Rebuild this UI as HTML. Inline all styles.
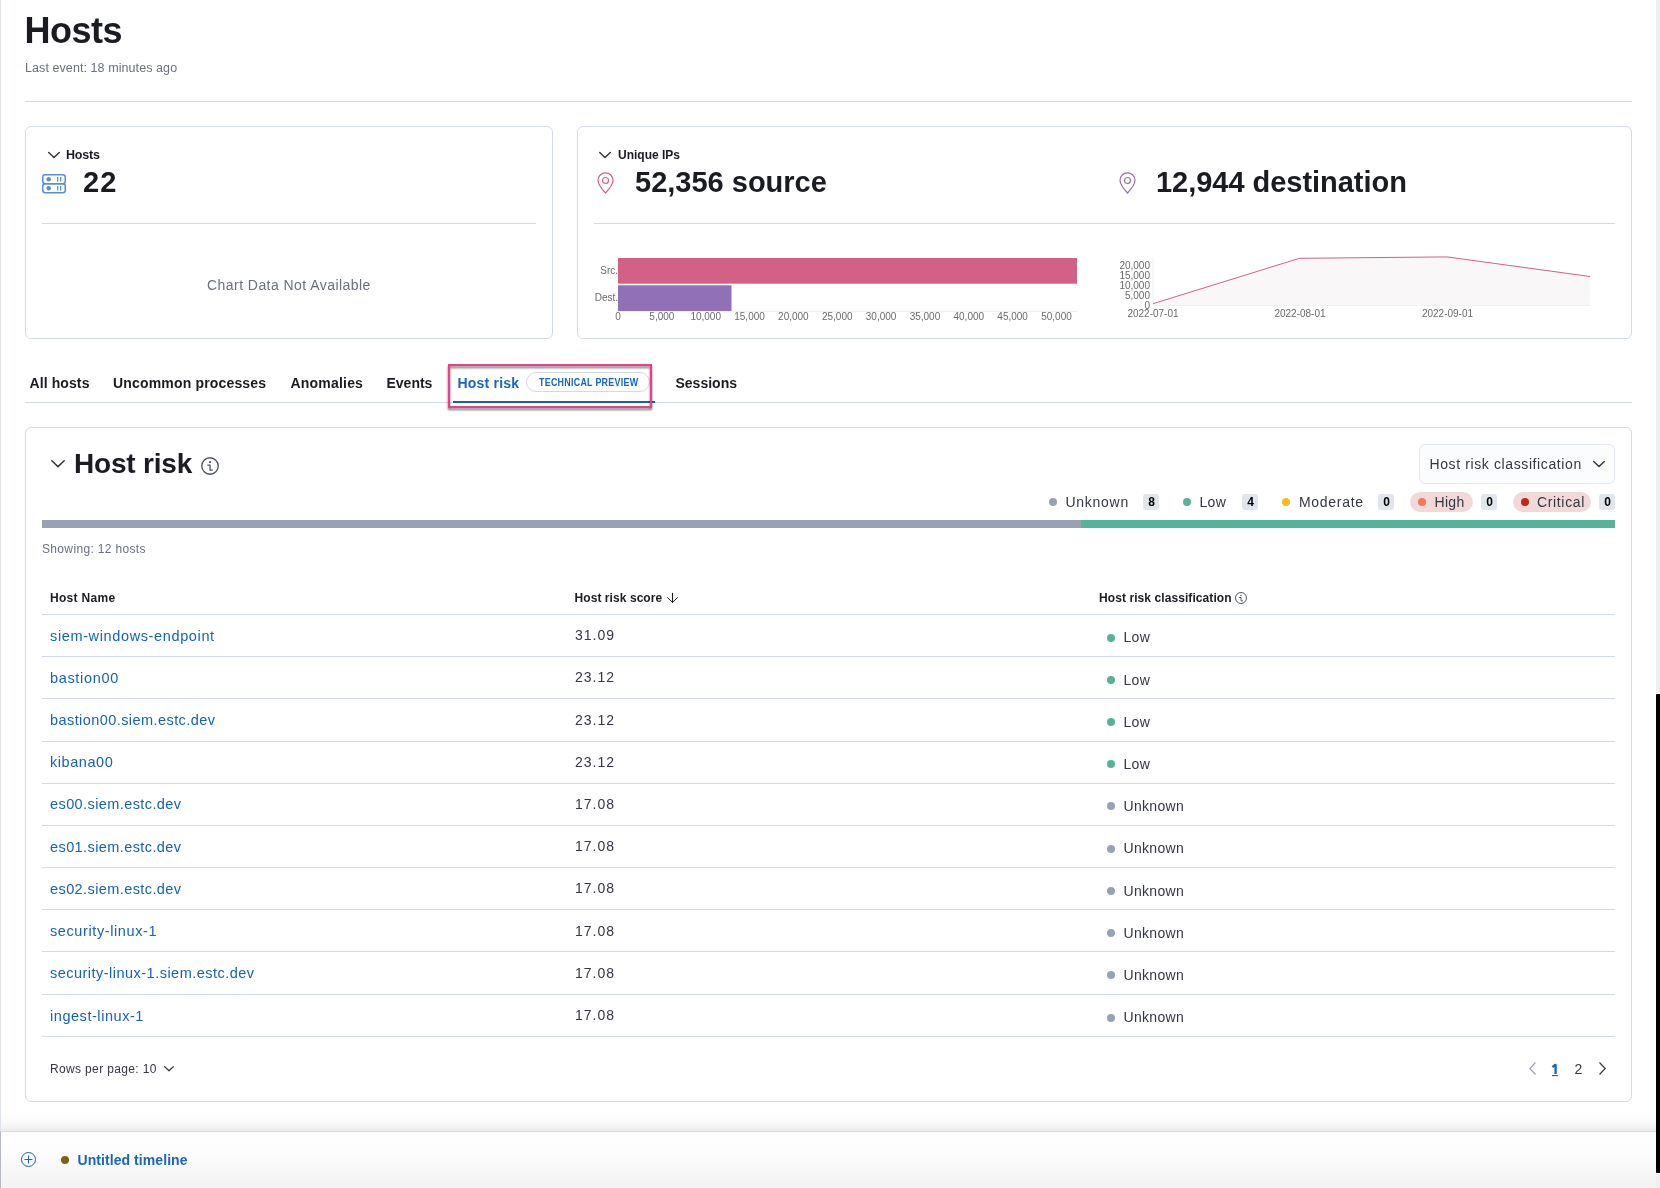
<!DOCTYPE html>
<html><head><meta charset="utf-8">
<style>
*{box-sizing:border-box;margin:0;padding:0}
body{will-change:transform;-webkit-font-smoothing:antialiased}html,body{width:1660px;height:1188px;overflow:hidden;background:#fff;font-family:"Liberation Sans",sans-serif;color:#343741}
.a{position:absolute;white-space:nowrap;line-height:1}
.b{font-weight:bold}
.panel{position:absolute;border:1px solid #D3DAE6;border-radius:6px;background:#fff}
.hr{position:absolute;height:1px;background:#D3DAE6}
.link{color:#1462BC}
svg{position:absolute;overflow:visible}
</style></head><body>
<div style="position:absolute;left:0;top:0;width:1px;height:1131px;background:#DDE2EC"></div>

<!-- Header -->
<div class="a b" style="left:24.6px;top:12.5px;font-size:36px;letter-spacing:-0.5px;color:#1A1C21">Hosts</div>
<div class="a" style="left:25px;top:62.4px;font-size:12.5px;letter-spacing:0.08px;color:#69707D">Last event: 18 minutes ago</div>
<div class="hr" style="left:25px;top:101px;width:1607px"></div>

<!-- Hosts panel -->
<div class="panel" style="left:25px;top:126px;width:528px;height:213px"></div>
<svg style="left:48px;top:152px" width="12" height="7" viewBox="0 0 12 7"><path d="M0.7 0.5 L6 5.6 L11.3 0.5" fill="none" stroke="#343741" stroke-width="1.45" stroke-linecap="round" stroke-linejoin="round"/></svg>
<div class="a b" style="left:66px;top:149.4px;font-size:12.5px;letter-spacing:-0.2px;color:#1A1C21">Hosts</div>
<svg style="left:42px;top:174px" width="24" height="20" viewBox="0 0 24 20">
 <rect x="0.75" y="0.75" width="22.5" height="9" rx="2.5" fill="none" stroke="#5B90C6" stroke-width="1.5"/>
 <rect x="0.75" y="9.75" width="22.5" height="9" rx="2.5" fill="none" stroke="#5B90C6" stroke-width="1.5"/>
 <circle cx="6.7" cy="5.3" r="2.25" fill="#5B90C6"/><circle cx="6.7" cy="14.3" r="2.25" fill="#5B90C6"/>
 <rect x="15" y="3" width="1.3" height="4.6" fill="#5B90C6"/><rect x="18" y="3" width="1.3" height="4.6" fill="#5B90C6"/>
 <rect x="15" y="12" width="1.3" height="4.6" fill="#5B90C6"/><rect x="18" y="12" width="1.3" height="4.6" fill="#5B90C6"/>
</svg>
<div class="a b" style="left:83px;top:167.5px;font-size:29px;letter-spacing:1.2px;color:#1A1C21">22</div>
<div class="hr" style="left:42px;top:223px;width:494px"></div>
<div class="a" style="left:207px;top:278px;font-size:14px;letter-spacing:0.45px;color:#69707D">Chart Data Not Available</div>

<!-- Unique IPs panel -->
<div class="panel" style="left:577px;top:126px;width:1055px;height:213px"></div>
<svg style="left:599px;top:152px" width="12" height="7" viewBox="0 0 12 7"><path d="M0.7 0.5 L6 5.6 L11.3 0.5" fill="none" stroke="#343741" stroke-width="1.45" stroke-linecap="round" stroke-linejoin="round"/></svg>
<div class="a b" style="left:618px;top:149.4px;font-size:12px;color:#1A1C21">Unique IPs</div>
<div class="a b" style="left:635px;top:168.4px;font-size:29px;letter-spacing:0px;color:#1A1C21">52,356 source</div>
<div class="a b" style="left:1156px;top:168.4px;font-size:29px;letter-spacing:-0.03px;color:#1A1C21">12,944 destination</div>
<div class="hr" style="left:594px;top:223px;width:1021px"></div>

<svg style="left:597px;top:172px" width="17" height="22" viewBox="0 0 17 22"><path d="M8.5 21 C8.5 21 1 13 1 8.3 A7.5 7.5 0 0 1 16 8.3 C16 13 8.5 21 8.5 21 Z" fill="none" stroke="#D36086" stroke-width="1.2"/><circle cx="8.5" cy="8.5" r="3" fill="none" stroke="#D36086" stroke-width="1.2"/></svg>
<svg style="left:1119px;top:172px" width="17" height="22" viewBox="0 0 17 22"><path d="M8.5 21 C8.5 21 1 13 1 8.3 A7.5 7.5 0 0 1 16 8.3 C16 13 8.5 21 8.5 21 Z" fill="none" stroke="#9170B8" stroke-width="1.2"/><circle cx="8.5" cy="8.5" r="3" fill="none" stroke="#9170B8" stroke-width="1.2"/></svg>

<!-- bar chart -->
<svg style="left:0;top:0" width="1660" height="400">
 <g font-family="Liberation Sans" font-size="10" fill="#6A6A6A">
  <text x="618" y="273.5" text-anchor="end">Src.</text>
  <text x="618" y="300.5" text-anchor="end">Dest.</text>
 </g>
 <rect x="618" y="258" width="459" height="25.7" fill="#D36086"/>
 <rect x="618" y="285.3" width="113.5" height="25.7" fill="#9170B8"/>
 <rect x="618" y="311" width="459" height="1" fill="#EEF0F3"/>
 <g font-family="Liberation Sans" font-size="10" fill="#6A6A6A" text-anchor="middle">
  <text x="618" y="320">0</text><text x="661.85" y="320">5,000</text><text x="705.7" y="320">10,000</text>
  <text x="749.55" y="320">15,000</text><text x="793.4" y="320">20,000</text><text x="837.25" y="320">25,000</text>
  <text x="881.1" y="320">30,000</text><text x="924.95" y="320">35,000</text><text x="968.8" y="320">40,000</text>
  <text x="1012.65" y="320">45,000</text><text x="1056.5" y="320">50,000</text>
 </g>
 <!-- area chart -->
 <polygon points="1153,303.7 1299.5,258.3 1447,256.9 1590,276.5 1590,305.5 1153,305.5" fill="#FAF7F9"/>
 <rect x="1153" y="305" width="437" height="1" fill="#EEF0F3"/>
 <rect x="1152.5" y="257" width="1" height="49" fill="#EEF0F3"/>
 <polyline points="1153,303.7 1299.5,258.3 1447,256.9 1590,276.5" fill="none" stroke="#D36086" stroke-width="1"/>
 <g font-family="Liberation Sans" font-size="10" fill="#6A6A6A" text-anchor="end">
  <text x="1150" y="269">20,000</text><text x="1150" y="279">15,000</text><text x="1150" y="289">10,000</text>
  <text x="1150" y="299">5,000</text><text x="1150" y="309">0</text>
 </g>
 <g font-family="Liberation Sans" font-size="10" fill="#6A6A6A" text-anchor="middle">
  <text x="1153" y="317">2022-07-01</text><text x="1300" y="317">2022-08-01</text><text x="1447.5" y="317">2022-09-01</text>
 </g>
</svg>

<!-- Tabs -->
<div class="hr" style="left:25px;top:402px;width:1607px"></div>
<div class="a b" style="left:29.5px;top:376px;font-size:14px;letter-spacing:0.1px;color:#1A1C21">All hosts</div>
<div class="a b" style="left:113px;top:376px;font-size:14px;letter-spacing:0.17px;color:#1A1C21">Uncommon processes</div>
<div class="a b" style="left:290.5px;top:376px;font-size:14px;letter-spacing:0.2px;color:#1A1C21">Anomalies</div>
<div class="a b" style="left:386.5px;top:376px;font-size:14px;color:#1A1C21">Events</div>
<div class="a b" style="left:457.5px;top:376px;font-size:14px;letter-spacing:0.2px;color:#1765C0">Host risk</div>
<div style="position:absolute;left:526px;top:372px;width:124px;height:20px;border:1px solid #D3DAE6;border-radius:10px"></div>
<div class="a b" style="left:538.8px;top:377.7px;font-size:10px;letter-spacing:0.3px;color:#1765C0;transform:scaleX(0.89);transform-origin:0 0">TECHNICAL PREVIEW</div>
<div style="position:absolute;left:453px;top:401px;width:202px;height:2px;background:#0D5FC0"></div>
<div class="a b" style="left:675.5px;top:376px;font-size:14px;color:#1A1C21">Sessions</div>
<div style="position:absolute;left:448px;top:364px;width:204px;height:44px;border:2px solid #EE3D8C;filter:drop-shadow(0px 2px 1.2px rgba(0,0,0,0.55))"></div>

<!-- Host risk panel -->
<div class="panel" style="left:25px;top:427px;width:1607px;height:675px"></div>
<svg style="left:51px;top:460px" width="14" height="8" viewBox="0 0 14 8"><path d="M0.8 0.7 L7 6.6 L13.2 0.7" fill="none" stroke="#343741" stroke-width="1.5" stroke-linecap="round" stroke-linejoin="round"/></svg>
<div class="a b" style="left:74px;top:449.8px;font-size:28px;letter-spacing:-0.2px;color:#1A1C21">Host risk</div>
<svg style="left:201px;top:457px" width="18" height="18" viewBox="0 0 18 18"><circle cx="9" cy="9" r="8.25" fill="none" stroke="#4A505C" stroke-width="1.3"/><rect x="8.1" y="4.2" width="1.9" height="1.9" rx="0.3" fill="#4A505C"/><path d="M6.3 8.2 H9.05 V13.2 H11.8" fill="none" stroke="#4A505C" stroke-width="1.3" stroke-linejoin="round"/></svg>

<div style="position:absolute;left:1419px;top:444px;width:196px;height:40px;border:1px solid #E3E8F2;border-radius:6px;background:#FBFCFD"></div>
<div class="a" style="left:1429.5px;top:457px;font-size:14px;letter-spacing:0.61px;color:#343741">Host risk classification</div>
<svg style="left:1593px;top:461px" width="12" height="7" viewBox="0 0 12 7"><path d="M0.7 0.5 L6 5.6 L11.3 0.5" fill="none" stroke="#343741" stroke-width="1.45" stroke-linecap="round" stroke-linejoin="round"/></svg>

<!-- legend -->
<div style="position:absolute;left:1049px;top:498px;width:8px;height:8px;border-radius:50%;background:#98A2B3"></div>
<div class="a" style="left:1065.5px;top:495px;font-size:14px;letter-spacing:0.72px">Unknown</div>
<div style="position:absolute;left:1143px;top:494px;width:16px;height:16px;border-radius:3px;background:#E0E5EE"></div>
<div class="a b" style="left:1143.5px;top:495.5px;width:16px;text-align:center;font-size:12px;color:#000">8</div>

<div style="position:absolute;left:1183px;top:498px;width:8px;height:8px;border-radius:50%;background:#54B399"></div>
<div class="a" style="left:1199.5px;top:495px;font-size:14px;letter-spacing:0.3px">Low</div>
<div style="position:absolute;left:1242px;top:494px;width:16px;height:16px;border-radius:3px;background:#E0E5EE"></div>
<div class="a b" style="left:1242.5px;top:495.5px;width:16px;text-align:center;font-size:12px;color:#000">4</div>

<div style="position:absolute;left:1282px;top:498px;width:8px;height:8px;border-radius:50%;background:#F5BD1B"></div>
<div class="a" style="left:1299px;top:495px;font-size:14px;letter-spacing:0.7px">Moderate</div>
<div style="position:absolute;left:1378px;top:494px;width:16px;height:16px;border-radius:3px;background:#E0E5EE"></div>
<div class="a b" style="left:1378.5px;top:495.5px;width:16px;text-align:center;font-size:12px;color:#000">0</div>

<div style="position:absolute;left:1410px;top:492px;width:63px;height:20px;border-radius:10px;background:#F2D9D9"></div>
<div style="position:absolute;left:1418px;top:498px;width:8px;height:8px;border-radius:50%;background:#F4775C"></div>
<div class="a" style="left:1434.5px;top:495px;font-size:14px;letter-spacing:0.3px">High</div>
<div style="position:absolute;left:1481px;top:494px;width:16px;height:16px;border-radius:3px;background:#E0E5EE"></div>
<div class="a b" style="left:1481.5px;top:495.5px;width:16px;text-align:center;font-size:12px;color:#000">0</div>

<div style="position:absolute;left:1513px;top:492px;width:78px;height:20px;border-radius:10px;background:#F2D9D9"></div>
<div style="position:absolute;left:1521px;top:498px;width:8px;height:8px;border-radius:50%;background:#BD271E"></div>
<div class="a" style="left:1537px;top:495px;font-size:14px;letter-spacing:0.65px">Critical</div>
<div style="position:absolute;left:1599px;top:494px;width:16px;height:16px;border-radius:3px;background:#E0E5EE"></div>
<div class="a b" style="left:1599.5px;top:495.5px;width:16px;text-align:center;font-size:12px;color:#000">0</div>

<div style="position:absolute;left:42px;top:520px;width:1039px;height:8px;background:#98A2B3"></div>
<div style="position:absolute;left:1081px;top:520px;width:534px;height:8px;background:#54B399"></div>

<div class="a" style="left:42px;top:542.8px;font-size:12px;letter-spacing:0.34px;color:#69707D">Showing: 12 hosts</div>

<!-- table header -->
<div class="a b" style="left:50px;top:591.8px;font-size:12px;letter-spacing:0.3px;color:#1A1C21">Host Name</div>
<div class="a b" style="left:574.5px;top:591.8px;font-size:12px;letter-spacing:0.07px;color:#1A1C21">Host risk score</div>
<svg style="left:667px;top:593px" width="11" height="10" viewBox="0 0 11 10"><path d="M5.5 0.4 V9.3" fill="none" stroke="#1A1C21" stroke-width="1.1" stroke-linecap="round"/><path d="M0.5 4.6 L5.5 9.4 L10.5 4.6" fill="none" stroke="#1A1C21" stroke-width="0.95" stroke-linecap="round" stroke-linejoin="round"/></svg>
<div class="a b" style="left:1099px;top:591.8px;font-size:12px;letter-spacing:0.08px;color:#1A1C21">Host risk classification</div>
<svg style="left:1235px;top:592px" width="12" height="12" viewBox="0 0 12 12"><circle cx="6" cy="6" r="5.5" fill="none" stroke="#4A505C" stroke-width="0.95"/><rect x="5.4" y="2.8" width="1.25" height="1.25" rx="0.2" fill="#4A505C"/><path d="M4.2 5.5 H6.05 V8.8 H7.9" fill="none" stroke="#4A505C" stroke-width="0.95" stroke-linejoin="round"/></svg>
<div class="hr" style="left:42px;top:614px;width:1573px"></div>
<div class="a link" style="left:50px;top:628.53px;font-size:14.5px;letter-spacing:0.631px">siem-windows-endpoint</div>
<div class="a" style="left:575px;top:628.15px;font-size:14px;letter-spacing:1.0px">31.09</div>
<div style="position:absolute;left:1107px;top:633.60px;width:8px;height:8px;border-radius:50%;background:#54B399"></div>
<div class="a" style="left:1123.5px;top:630.30px;font-size:14px;letter-spacing:0.3px">Low</div>
<div class="hr" style="left:42px;top:656px;width:1573px"></div>
<div class="a link" style="left:50px;top:670.75px;font-size:14.5px;letter-spacing:0.663px">bastion00</div>
<div class="a" style="left:575px;top:670.37px;font-size:14px;letter-spacing:1.0px">23.12</div>
<div style="position:absolute;left:1107px;top:675.82px;width:8px;height:8px;border-radius:50%;background:#54B399"></div>
<div class="a" style="left:1123.5px;top:672.52px;font-size:14px;letter-spacing:0.3px">Low</div>
<div class="hr" style="left:42px;top:698px;width:1573px"></div>
<div class="a link" style="left:50px;top:712.97px;font-size:14.5px;letter-spacing:0.427px">bastion00.siem.estc.dev</div>
<div class="a" style="left:575px;top:712.59px;font-size:14px;letter-spacing:1.0px">23.12</div>
<div style="position:absolute;left:1107px;top:718.04px;width:8px;height:8px;border-radius:50%;background:#54B399"></div>
<div class="a" style="left:1123.5px;top:714.74px;font-size:14px;letter-spacing:0.3px">Low</div>
<div class="hr" style="left:42px;top:741px;width:1573px"></div>
<div class="a link" style="left:50px;top:755.19px;font-size:14.5px;letter-spacing:0.563px">kibana00</div>
<div class="a" style="left:575px;top:754.81px;font-size:14px;letter-spacing:1.0px">23.12</div>
<div style="position:absolute;left:1107px;top:760.26px;width:8px;height:8px;border-radius:50%;background:#54B399"></div>
<div class="a" style="left:1123.5px;top:756.96px;font-size:14px;letter-spacing:0.3px">Low</div>
<div class="hr" style="left:42px;top:783px;width:1573px"></div>
<div class="a link" style="left:50px;top:797.41px;font-size:14.5px;letter-spacing:0.407px">es00.siem.estc.dev</div>
<div class="a" style="left:575px;top:797.03px;font-size:14px;letter-spacing:1.0px">17.08</div>
<div style="position:absolute;left:1107px;top:802.48px;width:8px;height:8px;border-radius:50%;background:#98A2B3"></div>
<div class="a" style="left:1123.5px;top:799.18px;font-size:14px;letter-spacing:0.3px">Unknown</div>
<div class="hr" style="left:42px;top:825px;width:1573px"></div>
<div class="a link" style="left:50px;top:839.63px;font-size:14.5px;letter-spacing:0.407px">es01.siem.estc.dev</div>
<div class="a" style="left:575px;top:839.25px;font-size:14px;letter-spacing:1.0px">17.08</div>
<div style="position:absolute;left:1107px;top:844.70px;width:8px;height:8px;border-radius:50%;background:#98A2B3"></div>
<div class="a" style="left:1123.5px;top:841.40px;font-size:14px;letter-spacing:0.3px">Unknown</div>
<div class="hr" style="left:42px;top:867px;width:1573px"></div>
<div class="a link" style="left:50px;top:881.85px;font-size:14.5px;letter-spacing:0.407px">es02.siem.estc.dev</div>
<div class="a" style="left:575px;top:881.47px;font-size:14px;letter-spacing:1.0px">17.08</div>
<div style="position:absolute;left:1107px;top:886.92px;width:8px;height:8px;border-radius:50%;background:#98A2B3"></div>
<div class="a" style="left:1123.5px;top:883.62px;font-size:14px;letter-spacing:0.3px">Unknown</div>
<div class="hr" style="left:42px;top:909px;width:1573px"></div>
<div class="a link" style="left:50px;top:924.07px;font-size:14.5px;letter-spacing:0.598px">security-linux-1</div>
<div class="a" style="left:575px;top:923.69px;font-size:14px;letter-spacing:1.0px">17.08</div>
<div style="position:absolute;left:1107px;top:929.14px;width:8px;height:8px;border-radius:50%;background:#98A2B3"></div>
<div class="a" style="left:1123.5px;top:925.84px;font-size:14px;letter-spacing:0.3px">Unknown</div>
<div class="hr" style="left:42px;top:951px;width:1573px"></div>
<div class="a link" style="left:50px;top:966.29px;font-size:14.5px;letter-spacing:0.479px">security-linux-1.siem.estc.dev</div>
<div class="a" style="left:575px;top:965.91px;font-size:14px;letter-spacing:1.0px">17.08</div>
<div style="position:absolute;left:1107px;top:971.36px;width:8px;height:8px;border-radius:50%;background:#98A2B3"></div>
<div class="a" style="left:1123.5px;top:968.06px;font-size:14px;letter-spacing:0.3px">Unknown</div>
<div class="hr" style="left:42px;top:994px;width:1573px"></div>
<div class="a link" style="left:50px;top:1008.51px;font-size:14.5px;letter-spacing:0.550px">ingest-linux-1</div>
<div class="a" style="left:575px;top:1008.13px;font-size:14px;letter-spacing:1.0px">17.08</div>
<div style="position:absolute;left:1107px;top:1013.58px;width:8px;height:8px;border-radius:50%;background:#98A2B3"></div>
<div class="a" style="left:1123.5px;top:1010.28px;font-size:14px;letter-spacing:0.3px">Unknown</div>
<div class="hr" style="left:42px;top:1036px;width:1573px"></div>

<div class="a" style="left:50px;top:1062.8px;font-size:12px;letter-spacing:0.35px;color:#343741">Rows per page: 10</div>
<svg style="left:164px;top:1066px" width="10" height="6" viewBox="0 0 10 6"><path d="M0.6 0.6 L5 4.8 L9.4 0.6" fill="none" stroke="#343741" stroke-width="1.3" stroke-linecap="round" stroke-linejoin="round"/></svg>
<svg style="left:1529px;top:1062px" width="7" height="13" viewBox="0 0 7 13"><path d="M6.5 0.5 L0.8 6.5 L6.5 12.5" fill="none" stroke="#98A2B3" stroke-width="1.2"/></svg>
<svg style="left:1550px;top:1062px" width="10" height="15" viewBox="0 0 10 15"><path d="M5.6 12 V2.9 H5.2 L2.4 5.1" fill="none" stroke="#1765C0" stroke-width="2.3" stroke-linejoin="round"/><rect x="2" y="13" width="6" height="1.1" fill="#1765C0"/></svg>
<div class="a" style="left:1574.5px;top:1061.8px;font-size:14px;color:#343741">2</div>
<svg style="left:1599px;top:1062px" width="7" height="13" viewBox="0 0 7 13"><path d="M0.5 0.5 L6.2 6.5 L0.5 12.5" fill="none" stroke="#343741" stroke-width="1.2"/></svg>

<!-- timeline bar -->
<div style="position:absolute;left:1px;top:1111px;width:1655px;height:20px;background:linear-gradient(to bottom,rgba(0,0,0,0) 0%,rgba(0,0,0,0.015) 50%,rgba(0,0,0,0.07) 100%)"></div>
<div style="position:absolute;left:0;top:1131px;width:1656px;height:57px;border-top:1px solid #DADADA;border-left:1px solid #B4B9C5;background:linear-gradient(to bottom,#FFFFFF 0%,#FDFDFD 35%,#F2F2F2 100%)"></div>
<svg style="left:21px;top:1152px" width="15" height="15" viewBox="0 0 15 15"><circle cx="7.5" cy="7.5" r="7" fill="none" stroke="#1765C0" stroke-width="1"/><path d="M7.5 3.5 V11.5 M3.5 7.5 H11.5" fill="none" stroke="#1765C0" stroke-width="1"/></svg>
<div style="position:absolute;left:61px;top:1155.6px;width:8px;height:8px;border-radius:50%;background:#806014"></div>
<div class="a b" style="left:77.5px;top:1152.8px;font-size:14px;letter-spacing:0.07px;color:#1765C0">Untitled timeline</div>

<!-- scrollbar -->
<div style="position:absolute;left:1656px;top:0;width:4px;height:693px;background:#EEEFF3"></div>
<div style="position:absolute;left:1656px;top:693px;width:4px;height:481px;background:#fff"></div>
<div style="position:absolute;left:1656px;top:694px;width:4px;height:479px;background:#000;border-radius:1px 0 0 1px"></div>
<div style="position:absolute;left:1656px;top:1174px;width:4px;height:14px;background:#EEEFF3"></div>
</body></html>
